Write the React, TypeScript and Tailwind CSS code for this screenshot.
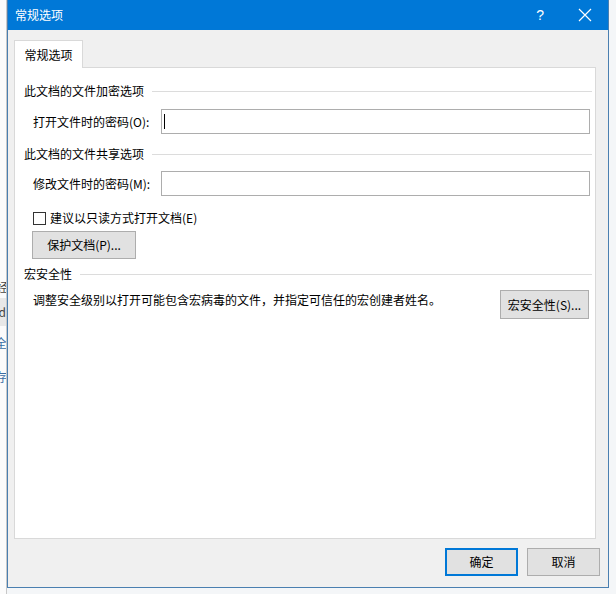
const ui = { fontFamily: '"Microsoft YaHei UI", "Noto Sans CJK SC", "Noto Sans", sans-serif' };

function Section({ title }: { title: string }) {
  return (
    <div className="flex items-center gap-2 pl-[9px] pr-[3px]">
      <span className="leading-[14px]">{title}</span>
      <div className="h-px flex-1 bg-[#dcdcdc]" />
    </div>
  );
}

function Field({ label, focused }: { label: string; focused?: boolean }) {
  return (
    <div className="flex items-center pl-[18px] pr-[5px]">
      <span className="w-[128px]">{label}</span>
      <div className="flex h-[25px] flex-1 items-center border border-[#adadad] bg-white pl-[2px]">
        {focused && <div className="h-[15px] w-px bg-black" />}
      </div>
    </div>
  );
}

function Btn({ children, primary, className = "" }: { children: React.ReactNode; primary?: boolean; className?: string }) {
  return (
    <div
      className={`flex items-center justify-center bg-[#e1e1e1] ${
        primary ? "border-2 border-[#0078d7]" : "border border-[#adadad]"
      } ${className}`}
    >
      {children}
    </div>
  );
}

export default function App() {
  return (
    <div className="relative h-[594px] w-[616px] overflow-hidden bg-[#f4f6f8] text-[12px] text-black" style={ui}>
      {/* window behind the dialog */}
      <div className="flex h-full w-[7px] flex-col overflow-hidden border-r border-[#c8c8c8] bg-[#fbfbfb] text-[12px] text-[#444]">
        <div className="h-[276px] shrink-0" />
        <div className="-ml-[4px] h-[22px] shrink-0 leading-[22px]">经</div>
        <div className="-ml-[6px] h-[28px] shrink-0 bg-[#e8e8e8] leading-[28px]">rd</div>
        <div className="-ml-[5px] h-[34px] shrink-0 leading-[34px] text-[#3a6ea5]">全</div>
        <div className="-ml-[5px] h-[34px] shrink-0 leading-[34px] text-[#3a6ea5]">存</div>
      </div>

      <div className="absolute left-[7px] top-0 flex h-[588px] w-[602px] flex-col border border-t-0 border-[#4a7fb0] bg-[#f0f0f0]">
        {/* title bar */}
        <div className="flex h-[30px] items-center bg-[#0078d7] text-white">
          <span className="ml-[7px] text-[12px]">常规选项</span>
          <span className="ml-auto mr-[34px] text-[14px]" style={{ fontFamily: '"Liberation Sans", sans-serif' }}>?</span>
          <svg width="14" height="14" viewBox="0 0 14 14" className="mr-[16px]">
            <path d="M1 1 L13 13 M13 1 L1 13" stroke="white" strokeWidth="1.2" />
          </svg>
        </div>

        <div className="flex flex-1 flex-col pl-[6px] pr-[12px] pt-[10px]">
          {/* tab header */}
          <div className="flex">
            <div className="relative z-10 -mb-px flex h-[28px] w-[69px] items-center justify-center border border-b-0 border-[#d9d9d9] bg-white">
              常规选项
            </div>
          </div>

          {/* tab page */}
          <div className="flex h-[472px] flex-col border border-[#d9d9d9] bg-white pt-[16px]">
            <Section title="此文档的文件加密选项" />
            <div className="mt-[11px]">
              <Field label="打开文件时的密码(O):" focused />
            </div>
            <div className="mt-[13px]">
              <Section title="此文档的文件共享选项" />
            </div>
            <div className="mt-[10px]">
              <Field label="修改文件时的密码(M):" />
            </div>
            <div className="mt-[13px] flex items-center gap-[4px] pl-[18px]">
              <div className="h-[13px] w-[13px] border border-[#333] bg-white" />
              <span>建议以只读方式打开文档(E)</span>
            </div>
            <div className="mt-[4px] pl-[17px]">
              <Btn className="h-[28px] w-[104px]">保护文档(P)...</Btn>
            </div>
            <div className="mt-[8px]">
              <Section title="宏安全性" />
            </div>
            <div className="mt-[9px] flex items-start justify-between pl-[18px] pr-[6px]">
              <span className="mt-px">调整安全级别以打开可能包含宏病毒的文件，并指定可信任的宏创建者姓名。</span>
              <Btn className="h-[29px] w-[89px]">宏安全性(S)...</Btn>
            </div>
          </div>

          {/* dialog buttons */}
          <div className="-mr-[4px] mt-[9px] flex justify-end gap-[9px]">
            <Btn primary className="h-[28px] w-[73px]">确定</Btn>
            <Btn className="h-[28px] w-[73px]">取消</Btn>
          </div>
        </div>
      </div>
    </div>
  );
}
